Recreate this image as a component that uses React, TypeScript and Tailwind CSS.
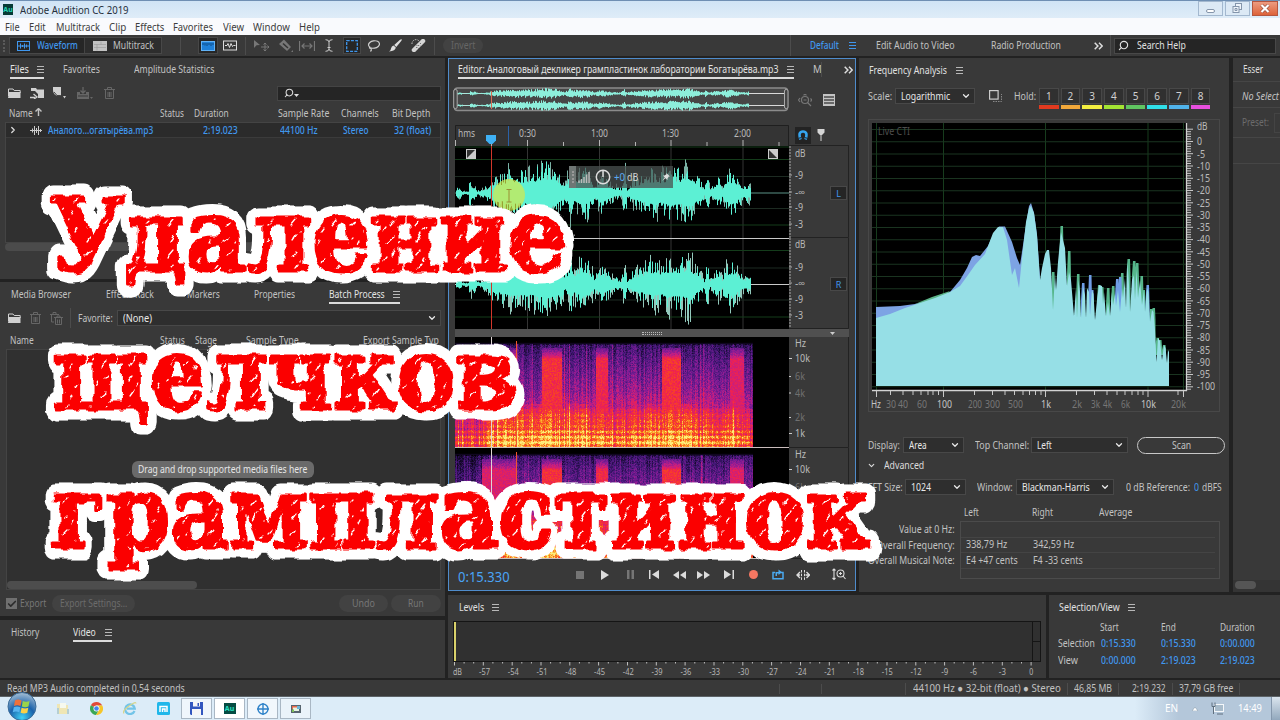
import React, { useEffect, useLayoutEffect, useRef, useState } from 'react';
import { Check, ChevronDown, ChevronRight, Search } from 'lucide-react';

// Deterministic noise, so the drawings are stable between renders
const rng = (seed: number) => () => {
  seed = (seed * 1664525 + 1013904223) % 4294967296;
  return seed / 4294967296;
};

const lerp = (pts: number[][], x: number) => {
  if (x <= pts[0][0]) return pts[0][1];
  for (let i = 1; i < pts.length; i++) {
    if (x <= pts[i][0]) {
      const [x0, y0] = pts[i - 1];
      const [x1, y1] = pts[i];
      return y0 + ((y1 - y0) * (x - x0)) / (x1 - x0);
    }
  }
  return pts[pts.length - 1][1];
};

const T: React.FC<{ w: number; className?: string; children: React.ReactNode }> = ({ w, className = '', children }) => {
  const ref = useRef<HTMLSpanElement>(null);
  const [k, setK] = useState(1);
  useLayoutEffect(() => {
    if (ref.current) setK(w / ref.current.offsetWidth);
  }, [w]);
  return (
    <span className={`inline-block shrink-0 ${className}`} style={{ width: w }}>
      <span ref={ref} className="inline-block origin-left whitespace-nowrap" style={{ transform: `scaleX(${k})` }}>{children}</span>
    </span>
  );
};

const Burger: React.FC<{ className?: string }> = ({ className = '' }) => (
  <span className={`flex w-[7px] shrink-0 flex-col gap-[2px] ${className}`}>
    <span className="h-px bg-current" />
    <span className="h-px bg-current" />
    <span className="h-px bg-current" />
  </span>
);

const ActiveTab: React.FC<{ w: number; label: string; gap?: string; className?: string }> = ({ w, label, gap = 'gap-2', className = '' }) => (
  <div className={`flex h-[18px] shrink-0 items-center border-b-2 border-[#dcdcdc] text-[#e4e4e4] ${gap} ${className}`}>
    <T w={w}>{label}</T>
    <Burger className="text-[#b8b8b8]" />
  </div>
);

const Dropdown: React.FC<{ w: number; label: string; className?: string }> = ({ w, label, className = '' }) => (
  <div className={`flex h-4 shrink-0 items-center justify-between border border-[#484848] bg-[#2e2e2e] pr-[3px] pl-[5px] text-[#e8e8e8] ${className}`}>
    <T w={w}>{label}</T>
    <ChevronDown size={10} strokeWidth={3} />
  </div>
);

const Folder = () => (
  <svg width="13" height="10" viewBox="0 0 13 10" className="shrink-0 text-[#d0d0d0]">
    <path d="M.5 8V1h4.5l1.2 1.5h6V5" fill="none" stroke="currentColor" />
    <path d="M1 4h11.5v6H0z" fill="currentColor" />
  </svg>
);

const Trash: React.FC<{ className?: string }> = ({ className = '' }) => (
  <svg width="11" height="12" viewBox="0 0 11 12" className={`shrink-0 text-[#666] ${className}`}>
    <path d="M0 2.5h11M3.5 2V.5h4V2M1.5 3v8.500h8V3M4 5v5M5.500 5v5M7 5v5" fill="none" stroke="currentColor" />
  </svg>
);

const Guillemet: React.FC<{ className?: string }> = ({ className = '' }) => (
  <svg width="9" height="8" viewBox="0 0 9 8" className={`shrink-0 text-[#ddd] ${className}`}>
    <path d="M.7 .7l3.2 3.3L.7 7.3M5 .7l3.2 3.3L5 7.3" fill="none" stroke="currentColor" strokeWidth="1.500" />
  </svg>
);

const Sep: React.FC<{ className?: string }> = ({ className = '' }) => <span className={`w-px shrink-0 bg-[#4c4c4c] ${className}`} />;

/* ---------- window chrome ---------- */

const TitleBar = () => (
  <div className="flex h-[18px] shrink-0 items-center border-t border-[#6f8fb3] bg-linear-to-b from-[#d0e4f5] to-[#dfecf8] pl-[3px] text-[#26303c]">
    <span className="flex h-[11px] w-[10px] items-center justify-center bg-[#063b36] text-[7px] font-bold text-[#25d3b5]">Au</span>
    <T w={109} className="ml-[7px] text-[11px]">Adobe Audition CC 2019</T>
    <div className="ml-auto flex h-full gap-[2px] pr-[2px] pb-[2px]">
      <span className="flex w-[25px] items-end justify-center border border-[#a3b8cf] bg-[#dce9f5] pb-[2px]"><i className="h-1 w-[9px] rounded-xs border border-[#8495ab] bg-white" /></span>
      <span className="flex w-[25px] items-center justify-center border border-[#a3b8cf] bg-[#dce9f5]">
        <svg width="11" height="11" viewBox="0 0 11 11" fill="#eef4fa" stroke="#8495ab"><rect x="3.500" y=".5" width="6" height="6" /><rect x="1" y="3.500" width="6" height="6" /><path d="M3 5.500h2v2H3z" /></svg>
      </span>
      <span className="flex w-[26px] items-center justify-center border border-[#b5563f] bg-linear-to-b from-[#ec9b80] to-[#dd6238]">
        <svg width="10" height="9" viewBox="0 0 10 9"><path d="M1.500 1l7 7m0-7l-7 7" stroke="#8d4534" strokeWidth="3.400" /><path d="M1.500 1l7 7m0-7l-7 7" stroke="#fff" strokeWidth="2.200" /></svg>
      </span>
    </div>
  </div>
);

const MENU: [string, number][] = [['File', 15], ['Edit', 17], ['Multitrack', 44], ['Clip', 17], ['Effects', 29], ['Favorites', 40], ['View', 21], ['Window', 37], ['Help', 21]];

const MenuBar = () => (
  <div className="flex h-[17px] shrink-0 items-center gap-[9.300px] bg-[#f9fafd] pl-[5px] text-[11px] text-[#3c3c3c]">
    {MENU.map(([label, w]) => <T key={label} w={w}>{label}</T>)}
  </div>
);

const Toolbar = () => (
  <div className="flex h-[21px] shrink-0 items-center bg-[#393939] text-[#c2c2c2]">
    <div className="flex w-[790px] items-center">
      <span className="ml-[3px] h-3 w-[2px] border-l-2 border-dotted border-[#5a5a5a]" />
      <div className="ml-1 flex h-[17px] w-[153px] items-center border border-[#484848] bg-[#2d2d2d]">
        <div className="flex h-full w-[75px] items-center gap-[7px] border-r border-[#444] bg-[#262626] pl-[7px] font-medium text-[#4097ee]">
          <svg width="13" height="10" viewBox="0 0 13 10" fill="none" stroke="currentColor"><rect x=".5" y=".5" width="12" height="9" /><path d="M1 5h11M3.500 2.500v5M5.500 4v2M7.500 2.500v5M9.500 3.500v3" /></svg>
          <T w={41}>Waveform</T>
        </div>
        <svg width="14" height="10" viewBox="0 0 14 10" className="ml-2"><path fill="currentColor" d="M0 0h14v10H0z" /><path d="M1 3.500h12M1 6.500h12M4 3.500v6M8 .5v3" stroke="#999" strokeWidth=".6" /></svg>
        <T w={41} className="ml-[6px]">Multitrack</T>
      </div>
      <Sep className="ml-[18px] h-[18px]" />
      <span className="ml-[17px] flex h-[17px] w-[20px] items-center justify-center border border-[#474747] bg-[#262626]">
        <svg width="14" height="10" viewBox="0 0 14 10"><rect x=".5" y=".5" width="13" height="9" fill="#1f80d8" stroke="#62b2f5" /><path d="M2 4V2m2 2.500V2m2 3V2m2 2V2m2 3V2m2 2V2" stroke="#0d4a86" /></svg>
      </span>
      <svg width="14" height="11" viewBox="0 0 14 11" fill="none" stroke="#ddd" className="ml-[5px]"><rect x=".5" y="1" width="13" height="9" /><path d="M2 5.500h2l1-2 1.500 4 1.500-4 1.500 3 1-1h2" /></svg>
      <Sep className="ml-[8px] h-[18px]" />
      <svg width="15" height="13" viewBox="0 0 15 13" className="ml-[8px] text-[#777]"><path d="M0 1l6 5-3.500.3L0 9z" fill="currentColor" /><path d="M7 8h8M11 4v8M9.500 5.500L11 4l1.500 1.500M9.500 10.500L11 12l1.500-1.500M13.500 6.500L15 8l-1.500 1.500" fill="none" stroke="currentColor" /></svg>
      <svg width="14" height="13" viewBox="0 0 14 13" className="ml-[10px] text-[#777]"><path d="M0 5l5-4.500L12 8l-4 4z" fill="currentColor" /><path d="M4 4.500l5 4.500" stroke="#333" strokeWidth="1.500" /><path d="M14 11v2h-2z" fill="currentColor" /></svg>
      <svg width="16" height="12" viewBox="0 0 16 12" fill="none" stroke="#777" className="ml-[6px]"><path d="M.5 1v10M15.500 1v10M3 6h10M5.500 3.500L3 6l2.500 2.500M10.500 3.500L13 6l-2.500 2.500" strokeWidth="1.200" /></svg>
      <svg width="8" height="13" viewBox="0 0 8 13" fill="none" stroke="#ccc" className="ml-[10px]"><path d="M.5.7Q4 .7 4 3v7q0 2.300-3.500 2.300M7.500.7Q4 .7 4 3M4 10q0 2.300 3.500 2.300M2.500 8.500h3" /></svg>
      <span className="ml-[10px] flex h-[17px] w-[18px] items-center justify-center border border-[#474747] bg-[#262626]">
        <svg width="12" height="12" viewBox="0 0 12 12"><rect x=".7" y=".7" width="10.600" height="10.600" fill="none" stroke="#3f97ee" strokeWidth="1.300" strokeDasharray="3 1.240" /></svg>
      </span>
      <svg width="13" height="12" viewBox="0 0 13 12" fill="none" stroke="#d0d0d0" strokeWidth="1.200" className="ml-[6px]"><ellipse cx="7" cy="4.500" rx="5.500" ry="3.700" transform="rotate(-8 7 4.500)" /><path d="M3 6.500Q1.500 8.500 4 8.500Q5 10 3.500 11.500" /></svg>
      <svg width="13" height="13" viewBox="0 0 13 13" className="ml-[9px]" fill="#ddd"><path d="M12.700.3Q13 1 12 2.300L7.300 8 5.200 6 11 .8Q12.200-.1 12.700.3zM4.600 6.600l2.200 2Q6.500 12 0 12.500 2 11.500 2 9.500 2.500 7 4.600 6.600z" /></svg>
      <svg width="15" height="13" viewBox="0 0 15 13" className="ml-[9px]"><path d="M3 11L12 2" stroke="#d5d5d5" strokeWidth="4.500" strokeLinecap="round" /><path d="M5.500 8.500l.1.100M7.500 6.500l.1.100M9.500 4.500l.1.100M7 9l.1.100M6 6.500l.1.100M9.500 7l.1.100" stroke="#444" strokeLinecap="round" /><path d="M1 5a4 4 0 0 1 7-3" fill="none" stroke="#ccc" strokeDasharray="1.500 1.200" /></svg>
      <Sep className="ml-[8px] h-[18px]" />
      <span className="ml-2 flex h-[15px] w-[40px] items-center justify-center rounded-full bg-[#424242] text-[#666]"><T w={24}>Invert</T></span>
    </div>
    <Sep className="h-full" />
    <T w={29} className="ml-[19px] font-medium text-[#4097ee]">Default</T>
    <Burger className="ml-[10px] text-[#4097ee]" />
    <T w={79} className="ml-[20px]">Edit Audio to Video</T>
    <T w={70} className="ml-[36px]">Radio Production</T>
    <Guillemet className="ml-[33px]" />
    <Sep className="ml-[7px] h-full" />
    <div className="ml-[3px] flex h-4 w-[162px] items-center border border-[#484848] bg-[#252525] pl-[3px] text-[#e0e0e0]">
      <Search size={11} strokeWidth={2.500} className="-scale-x-100" />
      <T w={49} className="ml-[8px]">Search Help</T>
    </div>
  </div>
);

/* ---------- left column ---------- */

const FilesPanel = () => (
  <section className="flex h-[221px] flex-col bg-[#393939] pt-[3px]">
    <div className="flex pl-[10px]">
      <ActiveTab w={19} label="Files" />
      <T w={37} className="mt-px ml-[19px]">Favorites</T>
      <T w={80} className="mt-px ml-[34px]">Amplitude Statistics</T>
    </div>
    <div className="mt-[6px] flex h-4 items-center pl-2">
      <Folder />
      <svg width="14" height="12" viewBox="0 0 14 12" className="ml-[9px] text-[#d0d0d0]"><path d="M1 4V1h5l1 1.500h7V11H8V7L5 4z" fill="currentColor" /><path d="M0 10.500h5M3.500 7L7 10l-3 2" fill="none" stroke="currentColor" strokeWidth="1.300" /></svg>
      <svg width="14" height="12" viewBox="0 0 14 12" className="ml-[8px] text-[#d0d0d0]"><path d="M1 0h8v8L6 9Q1 8 1 3z" fill="currentColor" /><path d="M2 5l3 3.500h3" fill="none" stroke="#444" /><path d="M11 9h3l-1.500 2.500z" fill="currentColor" /></svg>
      <svg width="16" height="13" viewBox="0 0 16 13" className="ml-[11px] text-[#666]"><path d="M0 5h3v2h6V5h3v7H0z" fill="currentColor" /><path d="M6 0v6M3.500 3.500L6 6l2.500-2.500" fill="none" stroke="currentColor" strokeWidth="1.300" /><path d="M1 9h10" stroke="#393939" /><path d="M13 10h3l-1.500 2z" fill="currentColor" /></svg>
      <Trash className="ml-[11px]" />
      <div className="mr-[4px] ml-auto flex h-[15px] w-[164px] items-center border border-[#444] bg-[#252525] pl-[6px] text-[#ddd]">
        <Search size={10} strokeWidth={2.500} className="-scale-x-100" />
        <svg width="5" height="3" viewBox="0 0 5 3" className="mt-1"><path d="M0 0h5L2.500 3z" fill="currentColor" /></svg>
      </div>
    </div>
    <div className="mt-[3px] flex h-[18px] items-center pl-[9px]">
      <T w={24}>Name</T>
      <svg width="7" height="8" viewBox="0 0 7 8" className="mb-[2px] ml-[2px]"><path d="M3.500 8V1M.5 3.500l3-3 3 3" fill="none" stroke="currentColor" strokeWidth="1.400" /></svg>
      <T w={24} className="ml-[118px]">Status</T>
      <T w={35} className="ml-[10px]">Duration</T>
      <T w={51} className="ml-[49px]">Sample Rate</T>
      <T w={38} className="ml-[12px]">Channels</T>
      <T w={38} className="ml-[13px]">Bit Depth</T>
    </div>
    <div className="mr-[4px] ml-[5px] h-[121px] border border-[#444] bg-[#303030]">
      <div className="flex h-[15px] items-center border-b border-[#3b3b3b] bg-[#2b2b2b] pl-[2px] font-medium text-[#4097ee]">
        <ChevronRight size={10} strokeWidth={3} className="text-[#ddd]" />
        <svg width="12" height="9" viewBox="0 0 12 9" className="ml-[12px]" stroke="#ccc"><path d="M0 4.500h12M2.500 2.500v4M4.500 0v9M6.500 2v5M8.500 0v9M10.500 3v3" /></svg>
        <T w={105} className="ml-[6px]">Аналого...огатырёва.mp3</T>
        <T w={35} className="ml-[50px]">2:19.023</T>
        <T w={38} className="ml-[42px]">44100 Hz</T>
        <T w={26} className="ml-[25px]">Stereo</T>
        <T w={37} className="ml-[25px]">32 (float)</T>
      </div>
    </div>
    <div className="ml-[5px] h-2 w-[290px] rounded-full bg-[#4b4b4b]" />
  </section>
);

const BatchPanel = () => (
  <section className="flex h-[334px] flex-col bg-[#393939] pt-1">
    <div className="flex pl-[11px]">
      <T w={60} className="mt-px">Media Browser</T>
      <T w={48} className="mt-px ml-[35px]">Effects Rack</T>
      <T w={33} className="mt-px ml-[33px]">Markers</T>
      <T w={41} className="mt-px ml-[34px]">Properties</T>
      <ActiveTab w={56} label="Batch Process" className="ml-[34px]" />
    </div>
    <div className="mt-[6px] flex h-4 items-center pl-2">
      <Folder />
      <Trash className="ml-[9px]" />
      <svg width="13" height="13" viewBox="0 0 13 13" fill="none" stroke="#666" className="ml-[9px]"><path d="M0 2.500h9M3 2V.5h3V2M1.500 3v7H4M4 5.500h9M7 5V4h3v1M5.500 6v6.500h6V6M7.500 7.500v4M9.500 7.500v4" /></svg>
      <Sep className="ml-[7px] h-5" />
      <T w={35} className="ml-[7px]">Favorite:</T>
      <Dropdown w={29} label="(None)" className="ml-[4px] w-[324px]" />
    </div>
    <div className="mt-[5px] flex h-[18px] items-center pl-[10px]">
      <T w={24}>Name</T>
      <T w={25} className="ml-[126px]">Status</T>
      <T w={22} className="ml-[10px]">Stage</T>
      <T w={53} className="ml-[29px]">Sample Type</T>
      <T w={76} className="ml-[64px]">Export Sample Typ</T>
    </div>
    <div className="mr-[4px] ml-[6px] flex h-[241px] flex-col items-center border border-[#444] bg-[#303030]">
      <div className="mt-[111px] mr-[2px] flex h-[17px] w-[182px] items-center rounded-md bg-[#6a6a6a] pl-[6px] text-[#e6e6e6]">
        <T w={169}>Drag and drop supported media files here</T>
      </div>
      <span className="mt-auto h-2 w-[190px] self-start rounded-full bg-[#4d4d4d]" />
    </div>
    <div className="mt-[5px] flex h-[17px] items-center pl-[6px] text-[#777]">
      <span className="flex h-[11px] w-[11px] items-center justify-center bg-[#707070] text-[#2c2c2c]"><Check size={10} strokeWidth={4} /></span>
      <T w={26} className="ml-[3px]">Export</T>
      <span className="ml-[6px] flex h-full w-[83px] items-center rounded-full bg-[#424242] pl-[8px] text-[#6c6c6c]"><T w={67}>Export Settings...</T></span>
      <span className="ml-auto flex h-full w-[49px] items-center justify-center rounded-full bg-[#424242]"><T w={23}>Undo</T></span>
      <span className="mr-[4px] ml-[3px] flex h-full w-[50px] items-center justify-center rounded-full bg-[#424242]"><T w={16}>Run</T></span>
    </div>
  </section>
);

const VideoPanel = () => (
  <section className="flex h-[58px] items-start bg-[#393939] pt-1 pl-[11px]">
    <T w={28} className="mt-px">History</T>
    <ActiveTab w={23} label="Video" gap="gap-[9px]" className="ml-[34px]" />
  </section>
);

/* ---------- editor ---------- */

const ENVELOPE = [[0, 6], [4, 8], [6, 2], [12, 3], [13, 14], [18, 11], [21, 3], [26, 5], [32, 10], [36, 18], [45, 20], [54, 28], [62, 26], [75, 26], [86, 32], [92, 34], [100, 28], [109, 12], [114, 32], [118, 20], [126, 30], [132, 26], [138, 11], [145, 22], [152, 15], [158, 9], [165, 6], [169, 28], [171, 6], [177, 16], [186, 20], [195, 27], [205, 24], [213, 30], [225, 28], [232, 35], [242, 18], [248, 6], [251, 26], [254, 6], [258, 13], [262, 19], [266, 9], [269, 22], [278, 26], [283, 14], [288, 9], [294, 12], [295, 0]];

const wavePath = (seed: number, mid: number, gain: number, body: number, power: number, width: number) => {
  const r = rng(seed);
  let d = '';
  for (let x = 0; x < width; x++) {
    const e = lerp(ENVELOPE, (x / width) * 295) * gain;
    const up = e * (body + (1 - body) * Math.pow(r(), power));
    const down = e * (body + (1 - body) * Math.pow(r(), power));
    d += `M${x + 0.5} ${(mid - up).toFixed(1)}V${(mid + down).toFixed(1)}`;
  }
  return d;
};

const Overview = () => (
  <svg width="336" height="25" viewBox="0 0 336 25" className="shrink-0">
    <rect x="1.500" y="1" width="333" height="22.500" rx="3" fill="#474747" stroke="#8c8c8c" strokeWidth="1.500" />
    <path d="M4 6.500h327M4 18.500h327" stroke="#d9d9d9" />
    <path d={wavePath(5, 6.5, 0.17, 0.4, 1, 292)} stroke="#8deedb" transform="translate(4 0)" />
    <path d={wavePath(9, 18.5, 0.17, 0.4, 1, 292)} stroke="#8deedb" transform="translate(4 0)" />
    <path d="M38.500 4v18" stroke="#d86a52" />
    <rect x=".7" y="2.500" width="3.500" height="19" rx="1.500" fill="#444" stroke="#aaa" />
    <rect x="331.500" y="2.500" width="3.500" height="19" rx="1.500" fill="#444" stroke="#aaa" />
  </svg>
);

const Ruler = () => (
  <svg width="334" height="21" viewBox="0 0 334 21" className="block shrink-0" fontSize="10.500" fill="#b9b9b9">
    <path d="M0 0h334v21H0z" fill="#343434" />
    <path d="M.5 21V.5H333.500V21" fill="none" stroke="#1f1f1f" />
    {[72, 144, 215.5, 287.5].map((x) => <path key={x} d={`M${x + 0.5} 15v6M${x + 36.5} 17v4`} stroke="#b5b5b5" />)}
    <path d="M.5 15v6M36.500 17v4" stroke="#b5b5b5" />
    <path d="M53.500 1v20" stroke="#2b62a8" />
    <text x="3" y="12" textLength="17" lengthAdjust="spacingAndGlyphs">hms</text>
    <text x="64" y="12" textLength="17" lengthAdjust="spacingAndGlyphs">0:30</text>
    <text x="136" y="12" textLength="17" lengthAdjust="spacingAndGlyphs">1:00</text>
    <text x="207" y="12" textLength="17" lengthAdjust="spacingAndGlyphs">1:30</text>
    <text x="279" y="12" textLength="17" lengthAdjust="spacingAndGlyphs">2:00</text>
    <path d="M31 10h10v5.500L37.500 19h-3L31 15.500z" fill="#3fb1f5" />
  </svg>
);

const Waveforms = () => (
  <svg width="334" height="183" viewBox="0 0 334 183" className="block shrink-0 bg-black">
    <path d="M72.500 0v183M144.500 0v183M216 0v183M288 0v183" stroke="#343434" />
    <path d="M0 1h334M0 13.500h334M0 79h334M0 104.500h334M0 171h334" stroke="#143c1b" />
    <path d="M0 30.500h334M0 62.500h334M0 122h334M0 154h334" stroke="#1d2b22" />
    <path d="M0 47h334" stroke="#5a9286" />
    <path d="M0 138.500h334M0 92.500h334" stroke="#c9c9c9" />
    <path d={wavePath(21, 47, 1.15, 0.15, 2.6, 295)} stroke="#7ab3a6" transform="translate(1 0)" />
    <path d={wavePath(3, 47, 0.95, 0.42, 2.4, 295)} stroke="#5cf0d4" transform="translate(1 0)" />
    <path d={wavePath(77, 138.5, 1.2, 0.15, 2.6, 295)} stroke="#92c8bb" transform="translate(1 0)" />
    <path d={wavePath(13, 138.5, 0.95, 0.42, 2.4, 295)} stroke="#5cf0d4" transform="translate(1 0)" />
    <path d="M36.500 0v183" stroke="#d2362a" />
    <circle cx="54" cy="49" r="16" fill="#d6e84a" opacity=".7" />
    <path d="M51.500 43.500h5M54 44v12M51.500 56h5" stroke="#9a8f35" />
    <path d="M11 3h10v10H11z" fill="#ccc" /><path d="M12 4h8L12 12z" fill="#333" />
    <path d="M313 3h10v10h-10z" fill="#ccc" /><path d="M314 12V4l8 8z" fill="#333" />
  </svg>
);

const HEAT = [[0, 0, 0, 0], [0.15, 24, 9, 48], [0.3, 68, 24, 120], [0.45, 128, 28, 150], [0.58, 196, 30, 130], [0.7, 240, 34, 78], [0.8, 248, 72, 30], [0.9, 251, 160, 36], [1, 253, 238, 125]];
const BURSTS = [[27, 61, 0.24], [87, 107, 0.34], [141, 153, 0.31], [207, 226, 0.34], [275, 289, 0.25]];
const FLOOR = [[0, 0], [5, 0.02], [8, 0.26], [20, 0.33], [35, 0.4], [55, 0.48], [68, 0.56], [76, 0.7], [90, 0.77], [103, 0.88], [110, 0.88]];

const Spectrogram: React.FC<{ seed: number }> = ({ seed }) => {
  const ref = useRef<HTMLCanvasElement>(null);
  useEffect(() => {
    const ctx = ref.current?.getContext('2d');
    if (!ctx) return;
    const r = rng(seed);
    const img = ctx.createImageData(334, 111);
    for (let x = 0; x < 298; x++) {
      const streak = (r() - 0.5) * 0.15;
      const click = r() > 0.95 ? 0.13 : 0;
      const loud = lerp(ENVELOPE, x) / 30 - 0.6;
      const burst = BURSTS.find((b) => x >= b[0] && x < b[1]);
      for (let y = 0; y < 111; y++) {
        let v = lerp(FLOOR, y);
        if (y > 6) v += streak + (r() - 0.5) * 0.17 + click + (x < 27 ? -0.07 : 0);
        if (y > 66) v += loud * 0.16 + Math.sin(y * 1.15) * 0.05 * (y > 90 ? 1.5 : 0.5);
        if (burst && y > 10 && y < 76) v = Math.max(v, lerp([[10, 0.38], [18, 0.42 + burst[2] * 0.5], [22, 0.4 + burst[2]], [76, 0.38 + burst[2]]], y) + (r() - 0.5) * 0.12);
        if (y < 5) v = 0;
        v = Math.min(1, Math.max(0, v));
        const i = (y * 334 + x) * 4;
        for (let c = 0; c < 3; c++) img.data[i + c] = lerp(HEAT.map((h) => [h[0], h[c + 1]]), v);
      }
    }
    for (let i = 3; i < img.data.length; i += 4) img.data[i] = 255;
    ctx.putImageData(img, 0, 0);
    ctx.fillStyle = '#e0d5d5';
    ctx.fillRect(36, 0, 1, 111);
    ctx.fillStyle = '#f0562c';
    ctx.fillRect(61, 4, 1, 107);
    ctx.fillStyle = '#c9bcbc';
    ctx.fillRect(0, 110, 334, 1);
  }, [seed]);
  return <canvas ref={ref} width={334} height={111} className="block shrink-0" />;
};

const scaleTicks = (from: number, to: number) => {
  let d = '';
  for (let y = from; y < to; y += 3) d += `M0 ${y}h2`;
  return d;
};

const DbScale: React.FC<{ label: string; ys: number[]; h: number; top: string }> = ({ label, ys, h, top }) => (
  <div className="relative">
    <svg width="60" height={h} viewBox={`0 0 60 ${h}`} className="block" fontSize="10" fill="#b9b9b9">
      <path d={`M59.500 0V${h - 0.5}H0`} fill="none" stroke="#222" />
      <path d={scaleTicks(1, h) + ys.slice(1).map((y) => `M0 ${y}h3`).join('')} stroke="#aaa" />
      {['dB', '-9', '-∞', '-9', '-3'].map((t, i) => <text key={i} x="6" y={ys[i] + 3.5} textLength={t === '-∞' || t === 'dB' ? 10.5 : 8} lengthAdjust="spacingAndGlyphs">{t}</text>)}
    </svg>
    <span className={`absolute left-[41px] flex h-[14px] w-[17px] items-center justify-center border border-[#484848] bg-[#252525] text-[9px] text-[#4097ee] ${top}`}>{label}</span>
  </div>
);

const HzScale = () => (
  <svg width="60" height="111" viewBox="0 0 60 111" className="block" fontSize="10" fill="#b9b9b9">
    <path d="M59.500 0V110.500H0" fill="none" stroke="#222" />
    <path d="M0 21.500h3M0 39.500h2M0 56h2M0 80.500h2M0 96.500h3" stroke="#ccc" />
    <text x="6" y="10" textLength="11" lengthAdjust="spacingAndGlyphs">Hz</text>
    <text x="6" y="25" textLength="15" lengthAdjust="spacingAndGlyphs">10k</text>
    <text x="6" y="43" textLength="10" lengthAdjust="spacingAndGlyphs" fill="#707070">6k</text>
    <text x="6" y="60" textLength="10" lengthAdjust="spacingAndGlyphs" fill="#707070">4k</text>
    <text x="6" y="84" textLength="10" lengthAdjust="spacingAndGlyphs" fill="#707070">2k</text>
    <text x="6" y="100" textLength="10" lengthAdjust="spacingAndGlyphs">1k</text>
  </svg>
);

const Hud = () => (
  <div className="absolute top-[20px] left-[114px] flex h-[22px] w-[104px] items-center bg-[#4a5250]/75 text-[#d5d5d5]">
    <span className="flex h-full w-[7px] items-center justify-center bg-[#6e7674]"><i className="h-3 border-l-2 border-dotted border-[#999]" /></span>
    <svg width="13" height="12" viewBox="0 0 13 12" className="ml-[2px]" stroke="#bbb" strokeWidth="1.500"><path d="M1 12V9.500M3.500 12V8M6 12V6M8.500 12V3.500M11 12V1" /></svg>
    <svg width="16" height="16" viewBox="0 0 16 16" className="ml-[4px]" fill="none" stroke="#ddd" strokeWidth="1.500"><circle cx="8" cy="8" r="6.700" /><path d="M8 8V2" /></svg>
    <T w={11} className="ml-[3px] text-[#5aa9f2]">+0</T>
    <T w={11} className="ml-[2px]">dB</T>
    <svg width="8" height="8" viewBox="0 0 8 8" className="ml-[24px]" fill="#ddd"><path d="M4.500 0L8 3.500 6.800 3.600 5.500 5.500 5.500 7 3.500 5.300 0 8 2.700 4.500 1 2.500 2.500 2.500 4.400 1.200z" /></svg>
  </div>
);

const Transport = () => (
  <div className="flex h-[31px] items-center pl-[9px] text-[#dcdcdc]">
    <T w={52} className="mt-[3px] text-[14px] text-[#4aa4f5]">0:15.330</T>
    <i className="ml-[66px] h-2 w-2 bg-[#757575]" />
    <svg width="8" height="10" viewBox="0 0 8 10" className="ml-[17px]"><path d="M0 0l8 5-8 5z" fill="currentColor" /></svg>
    <svg width="7" height="9" viewBox="0 0 7 9" className="ml-[18px] text-[#757575]"><path d="M0 0h2.500v9H0zM4.500 0H7v9H4.500z" fill="currentColor" /></svg>
    <svg width="10" height="9" viewBox="0 0 10 9" className="ml-[15px]"><path d="M0 0h1.500v9H0zM10 0v9L3 4.500z" fill="currentColor" /></svg>
    <svg width="13" height="8" viewBox="0 0 13 8" className="ml-[14px]"><path d="M6 0v8L0 4zM13 0v8L7 4z" fill="currentColor" /></svg>
    <svg width="13" height="8" viewBox="0 0 13 8" className="ml-[11px]"><path d="M0 0l6 4-6 4zM7 0l6 4-6 4z" fill="currentColor" /></svg>
    <svg width="10" height="9" viewBox="0 0 10 9" className="ml-[14px]"><path d="M0 0l7 4.500L0 9zM8.500 0H10v9H8.500z" fill="currentColor" /></svg>
    <i className="ml-[15px] h-[9px] w-[9px] rounded-full bg-[#f57762]" />
    <svg width="12" height="11" viewBox="0 0 12 11" className="ml-[14px] text-[#4aa9f0]"><path d="M3 3.500H1v6.200h10V3.500H9" fill="none" stroke="currentColor" strokeWidth="1.500" /><path d="M3.500 7V3h3V.5L10 3.200 6.500 6V4.500H5V7z" fill="currentColor" /></svg>
    <svg width="14" height="10" viewBox="0 0 14 10" className="ml-[12px]"><path d="M5.500 0v10M8.500 0v10" stroke="currentColor" strokeDasharray="2.500 1.200" /><path d="M4 2L1 5l3 3M10.500 2l3 3-3 3M1 5h3M9.500 5H14" fill="none" stroke="currentColor" strokeWidth="1.400" /></svg>
    <svg width="14" height="13" viewBox="0 0 14 13" className="ml-[22px]" fill="none" stroke="currentColor" strokeWidth="1.100"><path d="M2 1v10.500M.5 2.500L2 1l1.500 1.500M.5 10L2 11.500 3.500 10" /><circle cx="8.500" cy="5.500" r="3.500" /><path d="M11 8l2.500 3M7 5.500h3M8.500 4v3" /></svg>
  </div>
);

const Editor = () => (
  <section className="flex h-[533px] w-[408px] shrink-0 flex-col border border-[#4f8ccc] bg-[#393939]">
    <div className="flex h-[28px] pt-[2px] pl-[9px]">
      <ActiveTab w={320} label="Editor: Аналоговый декликер грампластинок лаборатории Богатырёва.mp3" gap="gap-[9px]" className="w-[336px]" />
      <span className="mt-px ml-[19px] h-[15px] w-[9px] overflow-hidden border-r border-[#4c4c4c]"><T w={11}>Mi</T></span>
      <Guillemet className="mt-[5px] ml-[22px]" />
    </div>
    <div className="flex h-[39px] pl-[4px]">
      <Overview />
      <svg width="14" height="13" viewBox="0 0 14 13" fill="none" stroke="#777" strokeWidth="1.200" className="mt-[7px] ml-[9px]"><circle cx="7" cy="6" r="3.500" /><path d="M9.500 8.500L13 12M5.500 6h3M2 4L.5 6 2 8M12.500 4.500L14 6l-1.500 1.500M5.500 1.300L7 .3l1.500 1" /></svg>
      <svg width="12" height="12" viewBox="0 0 12 12" className="mt-[7px] ml-[11px]"><path d="M0 0h12v12H0z" fill="#c4c4c4" /><path d="M1 3h10M1 6h10M1 9h10" stroke="#4a4a4a" strokeWidth="1.300" /></svg>
    </div>
    <div className="flex">
      <div className="ml-[6px] w-[334px]">
        <Ruler />
        <div className="relative">
          <Waveforms />
          <Hud />
        </div>
      </div>
      <div className="w-[60px]">
        <div className="flex h-[21px] items-center border-b border-[#222] pl-[6px]">
          <span className="flex h-[17px] w-[16px] items-center justify-center bg-[#232323]">
            <svg width="10" height="11" viewBox="0 0 10 11"><path d="M2.500 9.500Q-.3 1.500 5 1.500T7.500 9.500" fill="none" stroke="#35a5f0" strokeWidth="2.600" /><path d="M.8 8.200l2.600-.6M9.200 8.200l-2.600-.6" stroke="#232323" /></svg>
          </span>
          <svg width="8" height="12" viewBox="0 0 8 12" className="ml-[6px]"><path d="M.5 0h7v3.500L5 6H3L.5 3.500zM3.500 6h1v6h-1z" fill="#d5d5d5" /></svg>
        </div>
        <DbScale label="L" ys={[7, 29, 46, 61, 78]} h={92} top="top-[40px]" />
        <DbScale label="R" ys={[6, 29, 45, 61, 77]} h={91} top="top-[39px]" />
      </div>
    </div>
    <div className="ml-[6px] flex h-[8px] w-[394px] items-center bg-[#505050]">
      <i className="ml-[187px] h-[3px] w-5 border-y border-dotted border-[#bbb]" />
      <svg width="5" height="3" viewBox="0 0 5 3" className="ml-[168px]"><path d="M0 0h5L2.500 3z" fill="#ccc" /></svg>
    </div>
    <div className="ml-[6px] flex h-[222px] shrink-0">
      <div className="w-[334px]">
        <Spectrogram seed={42} />
        <Spectrogram seed={99} />
      </div>
      <div className="w-[60px]">
        <HzScale />
        <HzScale />
      </div>
    </div>
    <Transport />
  </section>
);

/* ---------- frequency analysis ---------- */

const HOLDS = ['bg-[#e23a1f]', 'bg-[#f2a83a]', 'bg-[#f3ee40]', 'bg-[#a3e433]', 'bg-[#60c561]', 'bg-[#30dfe8]', 'bg-[#50b3ea]', 'bg-[#e850df]'];

const LEFT_CH = [[4, 307], [28, 306], [43, 304], [58, 300], [78, 292], [88, 280], [95, 268], [100, 257], [104, 255], [108, 256], [116, 246], [122, 233], [127, 226.5], [133, 226.5], [140, 242], [145, 258], [148, 265], [150, 252], [154, 225], [157, 206], [159, 203], [162, 213], [165, 235], [168, 278]];
const COMMON = [[4, 318], [18, 314], [33, 308], [48, 303], [63, 298], [78, 292], [88, 286], [96, 275], [103, 265], [113, 254], [121, 233], [126, 227], [131, 227], [135, 240], [140, 275], [143, 268], [147, 288], [150, 258], [154, 222], [157, 208], [159, 206], [162, 213], [165, 235], [168, 280], [170, 268], [173, 254], [175, 250], [177, 250], [179, 268], [181, 310], [183, 274], [184, 290], [186, 262], [189, 232], [191, 240], [193, 248], [195, 286], [197, 272], [199, 280], [202, 316], [204, 288], [205, 318], [206.5, 280], [208, 292], [209, 318], [211, 287], [213, 295], [214, 318], [215, 288], [217, 292], [218, 315], [220, 290], [221.5, 294], [223, 320], [225, 300], [227, 285], [230, 286], [231, 304], [232, 292], [234, 316], [236, 302], [238, 316], [240, 292], [241, 305], [243, 294], [244, 306], [246, 290], [248, 312], [250, 288], [251, 298], [253, 278], [254, 308], [255.5, 262], [257, 285], [258, 312], [260, 280], [262, 275], [263, 300], [264.5, 270], [266, 298], [268, 280], [270, 305], [272, 290], [273, 312], [275, 288], [276.5, 292], [278, 322], [280, 310], [281.5, 312], [283, 330], [284.5, 362], [286, 338], [288, 341], [290, 360], [292, 345], [293.5, 348], [295, 363], [296, 350], [297, 352]];
const SPIKES = [[181, 272, 300], [189.5, 226, 250], [197, 251, 276], [206, 274, 300], [227, 285, 300], [230, 287, 304], [236, 288, 305], [241, 286, 300], [250, 273, 290], [256.5, 259, 275], [262, 261, 275], [265, 263, 280], [269.5, 276, 296], [271.5, 290, 305], [279, 309, 320], [281.5, 308, 320], [285.5, 338, 345], [288, 340, 347], [292, 345, 350]];
const BLUE_SPIKES = [[211, 283, 300], [218, 275, 300], [220, 290, 304], [245, 279, 296], [248, 277, 296], [275.5, 285, 303]];

const area = (pts: number[][]) => `M${pts[0][0]} 386${pts.map(([x, y]) => `L${x} ${y}`).join('')}V386z`;

const spikes = (list: number[][]) => list.map(([x, top, base]) => `M${x - 1} ${top}h2.500L${x + 2} ${base}V355H${x - 2}V${base}z`).join('');

const DB = ['dB', '0', '-5', '-10', '-15', '-20', '-25', '-30', '-35', '-40', '-45', '-50', '-55', '-60', '-65', '-70', '-75', '-80', '-85', '-90', '-95', '-100'];
const HZ: [string, number, number, boolean][] = [['Hz', 871, 10, true], ['30', 886, 10, false], ['40', 898, 10, false], ['60', 917, 10, false], ['100', 937, 15, true], ['200', 968, 14, false], ['300', 985, 15, false], ['500', 1008, 15, false], ['1k', 1041, 10, true], ['2k', 1072, 10, false], ['3k', 1091, 9, false], ['4k', 1103, 9, false], ['6k', 1121, 9, false], ['10k', 1141, 15, true], ['20k', 1171, 15, false]];

const rightTicks = () => {
  let d = '';
  for (let i = 0; i <= 106; i++) d += `M1187 ${(129.2 + i * 2.453).toFixed(1)}h${i % 5 === 0 ? 6 : 4}`;
  return d;
};

const FrequencyChart = () => (
  <svg width="352" height="293" viewBox="868 119 352 293" className="ml-[9px] block" fontSize="10">
    <rect x="868.500" y="119.500" width="351" height="292" fill="none" stroke="#484848" />
    <rect x="872" y="123" width="314" height="267" fill="#000" />
    <path d="M876.500 123v267M943.500 123v267M1045.500 123v267M1148 123v267M1183.500 123v267" stroke="#173c1d" />
    <path d={DB.map((_, i) => `M872 ${129.5 + i * 12.25}h314`).join('')} stroke="#1a3420" />
    <text x="878" y="135" fill="#4e4e4e" textLength="32" lengthAdjust="spacingAndGlyphs">Live CTI</text>
    <g transform="translate(872 0)">
      <path d={area(LEFT_CH)} fill="#7da3e4" />
      <path d="M43 304L60 297 78 291 70 300z" fill="#5db489" />
      <path d={spikes(SPIKES)} fill="#56b68b" />
      <path d={spikes(BLUE_SPIKES)} fill="#6f9de6" />
      <path d={area(COMMON)} fill="#96dfe6" />
    </g>
    <path d="M1186.500 123v268M872 390.500h315" stroke="#d2d2d2" strokeWidth="1.300" />
    <path d={rightTicks()} stroke="#c8c8c8" />
    <path d="M876.500 391v6M890.500 391v4M903 391v4M913 391v4M921 391v4M928 391v4M933 391v4M938.500 391v4M943.500 391v6M974.500 391v4M992.500 391v4M1005 391v4M1014.500 391v4M1023 391v4M1029.500 391v4M1035.500 391v4M1041 391v4M1045.500 391v6M1076.500 391v4M1094.500 391v4M1107 391v4M1117 391v4M1125 391v4M1132 391v4M1138 391v4M1143 391v4M1148 391v6M1178 391v4M1183.500 391v6" stroke="#c8c8c8" />
    {DB.map((t, i) => <text key={t} x="1197" y={i === 0 ? 129.5 : 133 + i * 12.26} fill="#bbb" textLength={t === 'dB' ? 10.5 : t === '0' ? 5 : t.length === 2 ? 8 : t.length === 3 ? 13 : 18} lengthAdjust="spacingAndGlyphs">{t}</text>)}
    {HZ.map(([t, x, w, major]) => <text key={t} x={x} y="408" fill={major ? '#c4c4c4' : '#777'} textLength={w} lengthAdjust="spacingAndGlyphs">{t}</text>)}
  </svg>
);

const FrequencyPanel = () => (
  <section className="flex h-[534px] w-[370px] shrink-0 flex-col bg-[#393939]">
    <div className="flex h-[24px] items-center pl-[10px] text-[#e0e0e0]">
      <T w={78}>Frequency Analysis</T>
      <Burger className="ml-[9px] text-[#b8b8b8]" />
    </div>
    <div className="mt-[6px] flex h-[23px] items-start pl-[9px]">
      <T w={24} className="mt-px">Scale:</T>
      <Dropdown w={49} label="Logarithmic" className="ml-[3px] w-[80px]" />
      <svg width="13" height="13" viewBox="0 0 13 13" fill="none" className="mt-[2px] ml-[14px]"><path d="M4 11.500h8.500V4" stroke="#888" strokeDasharray="1.500 1" /><rect x=".6" y=".6" width="8.500" height="8.500" stroke="#ccc" strokeWidth="1.200" /></svg>
      <T w={22} className="mt-px ml-[12px]">Hold:</T>
      <div className="ml-[3px] flex gap-[2.200px]">
        {HOLDS.map((color, i) => (
          <div key={color} className="w-[19.500px]">
            <div className="flex h-4 items-center justify-center border border-[#484848] bg-[#303030] text-[10px] text-[#d0d0d0]">{i + 1}</div>
            <div className={`mt-px h-[4px] ${color}`} />
          </div>
        ))}
      </div>
    </div>
    <div className="mt-[8px]"><FrequencyChart /></div>
    <div className="mt-[25px] flex h-4 items-center pl-[9px]">
      <T w={32}>Display:</T>
      <Dropdown w={18} label="Area" className="ml-[3px] w-[61px]" />
      <T w={54} className="ml-[11px]">Top Channel:</T>
      <Dropdown w={15} label="Left" className="ml-[2px] w-[97px]" />
      <span className="ml-[9px] flex h-[17px] w-[88px] shrink-0 items-center justify-center rounded-full border-[1.500px] border-[#c8c8c8]"><T w={19}>Scan</T></span>
    </div>
    <div className="flex h-[26px] items-center pb-px pl-[8px] text-[#dcdcdc]">
      <ChevronDown size={9} strokeWidth={3} />
      <T w={40} className="ml-[8px]">Advanced</T>
    </div>
    <div className="flex h-4 items-center pl-[9px]">
      <T w={35}>FFT Size:</T>
      <Dropdown w={20} label="1024" className="ml-[2px] w-[61px]" />
      <T w={36} className="ml-[11px]">Window:</T>
      <Dropdown w={68} label="Blackman-Harris" className="ml-[3px] w-[98px]" />
      <T w={64} className="ml-[12px]">0 dB Reference:</T>
      <T w={5} className="ml-[4px] text-[#4097ee]">0</T>
      <T w={20} className="ml-[3px]">dBFS</T>
    </div>
    <div className="mt-[9px] flex h-[17px] items-center pl-[105px]">
      <T w={15}>Left</T>
      <T w={21} className="ml-[53px]">Right</T>
      <T w={33} className="ml-[46px]">Average</T>
    </div>
    <div className="flex">
      <div className="flex w-[96px] flex-col items-end pt-px">
        <T w={56} className="h-[15.500px]">Value at 0 Hz:</T>
        <T w={79} className="h-[15.500px]">Overall Frequency:</T>
        <T w={87} className="h-[15.500px]">Overall Musical Note:</T>
      </div>
      <div className="ml-[5px] h-[58px] w-[260px] border border-[#4b4b4b]">
        <div className="mr-1 h-[15.500px] border-b border-[#444]" />
        <div className="mr-1 flex h-[15.500px] items-center border-b border-[#444] pl-[5px]"><T w={41}>338,79 Hz</T><T w={41} className="ml-[26px]">342,59 Hz</T></div>
        <div className="mr-1 flex h-[15.500px] items-center border-b border-[#444] pl-[5px]"><T w={52}>E4 +47 cents</T><T w={50} className="ml-[15px]">F4 -33 cents</T></div>
      </div>
    </div>
  </section>
);

const EssentialPanel = () => (
  <section className="flex h-[534px] w-[47px] shrink-0 flex-col overflow-hidden bg-[#393939]">
    <div className="flex h-[24px] items-center border-b border-[#464646] pl-[10px] text-[#dcdcdc]"><T w={20}>Esser</T></div>
    <div className="flex h-[26px] items-center border-b border-[#464646] pt-1 pl-[9px] italic"><T w={37}>No Select</T></div>
    <div className="flex h-[30px] items-center justify-between border-b border-[#464646] pl-[9px] text-[#6c6c6c]"><T w={27}>Preset:</T><i className="h-5 w-[6px] border border-r-0 border-[#444]" /></div>
    <div className="h-[26px] border-b border-[#464646]" />
    <div className="mt-auto h-[12px] bg-[#343434] pt-px pl-[2px]"><div className="h-2 w-[21px] rounded-full bg-[#555]" /></div>
  </section>
);

/* ---------- bottom row ---------- */

const LevelsPanel = () => (
  <section className="h-[83px] w-[598px] shrink-0 bg-[#393939]">
    <div className="flex h-[25px] items-center pl-[11px] text-[#e0e0e0]">
      <T w={25}>Levels</T>
      <Burger className="ml-[8px] text-[#b8b8b8]" />
    </div>
    <svg width="598" height="58" viewBox="448 620 598 58" className="block" fontSize="8.500" fill="#b5b5b5">
      <rect x="453.500" y="621.500" width="587" height="40" fill="#303030" stroke="#151515" />
      <path d="M1032.500 621v40M1032 641.500h8" stroke="#151515" />
      <path d="M455 622v39" stroke="#d8d06a" strokeWidth="2" />
      <path d={Array.from({ length: 61 }, (_, i) => `M${(454.5 + i * 9.61).toFixed(1)} 662v${i % 3 ? 1.5 : 3.5}`).join('')} stroke="#bdbdbd" />
      <text x="453" y="675" textLength="9" lengthAdjust="spacingAndGlyphs">dB</text>
      {Array.from({ length: 20 }, (_, i) => -57 + i * 3).map((db, i) => (
        <text key={db} x={484.5 + i * 28.77} y="675" textAnchor="middle" textLength={db === 0 ? 4 : db > -10 ? 7 : 11} lengthAdjust="spacingAndGlyphs">{db}</text>
      ))}
    </svg>
  </section>
);

const SelectionPanel = () => (
  <section className="h-[83px] w-[231px] shrink-0 bg-[#393939] pl-[9px]">
    <div className="flex h-[24px] items-center pl-px text-[#e0e0e0]">
      <T w={61}>Selection/View</T>
      <Burger className="ml-[8px] text-[#b8b8b8]" />
    </div>
    <div className="flex h-[17px] items-center pl-[42px]"><T w={19}>Start</T><T w={15} className="ml-[42px]">End</T><T w={35} className="ml-[44px]">Duration</T></div>
    <div className="flex h-[15px] items-center font-medium text-[#4097ee]"><T w={37} className="font-normal text-[#c2c2c2]">Selection</T><T w={35} className="ml-[6px]">0:15.330</T><T w={35} className="ml-[25px]">0:15.330</T><T w={35} className="ml-[24px]">0:00.000</T></div>
    <div className="flex h-[19px] items-center font-medium text-[#4097ee]"><T w={20} className="font-normal text-[#c2c2c2]">View</T><T w={35} className="ml-[23px]">0:00.000</T><T w={35} className="ml-[25px]">2:19.023</T><T w={35} className="ml-[24px]">2:19.023</T></div>
  </section>
);

const StatusBar = () => (
  <div className="mt-[2px] flex h-[17px] shrink-0 items-center border-b border-[#5c6266] bg-[#393939] pt-px pl-[7px]">
    <T w={178}>Read MP3 Audio completed in 0,54 seconds</T>
    <Sep className="ml-[594px] h-[10px]" />
    <Sep className="ml-[41px] h-[10px]" />
    <Sep className="ml-[83px] h-[12px]" />
    <T w={148} className="ml-[7px]">44100 Hz ● 32-bit (float) ● Stereo</T>
    <Sep className="ml-[6px] h-[12px]" />
    <T w={38} className="ml-[6px]">46,85 MB</T>
    <Sep className="ml-[6px] h-[12px]" />
    <T w={34} className="ml-[13px]">2:19.232</T>
    <Sep className="ml-[6px] h-[12px]" />
    <T w={54} className="ml-[6px]">37,79 GB free</T>
    <Sep className="ml-[6px] h-[12px]" />
  </div>
);

const Taskbar = () => (
  <div className="flex h-[23px] shrink-0 items-center bg-[#dcecf8]">
    <div className="relative h-full w-[45px] shrink-0">
      <svg width="30" height="28" viewBox="0 0 30 28" className="absolute -top-[5px] left-[7px]">
        <defs>
          <radialGradient id="orb" cx=".5" cy=".9" r=".9"><stop offset="0" stopColor="#3fd0f5" /><stop offset=".5" stopColor="#1a62ab" /><stop offset="1" stopColor="#a7bfd4" /></radialGradient>
        </defs>
        <circle cx="15" cy="14.500" r="14" fill="url(#orb)" stroke="#3a6b98" />
        <path d="M8 8.500q3-2 6.500 0l-1 5.500q-3.500-1.500-6.500 0z" fill="#f0713a" />
        <path d="M15.800 9q3.500 1.500 6.700 0l-1 5.500q-3.200 1.500-6.700 0z" fill="#9bd34a" />
        <path d="M6.800 15.300q3-1.500 6.500 0l-1 5q-3.500-1.500-6.500 0z" fill="#58b4ef" />
        <path d="M14.600 15.800q3.500 1.500 6.700 0l-1 5q-3.200 1.500-6.700 0z" fill="#fbd045" />
      </svg>
    </div>
    <svg width="14" height="13" viewBox="0 0 14 13" className="ml-[11px]"><path d="M1 2h5l1 1h5v9H1z" fill="#efe6b4" /><path d="M4 1h6v5H4z" fill="#f6f9ee" /><path d="M2 12V6M12 12V7" stroke="#b6cfd2" strokeWidth="2" /></svg>
    <svg width="13" height="13" viewBox="0 0 13 13" className="ml-[20px]"><path d="M6.500 6.500L.9 3.300A6.400 6.400 0 0 1 12.200 3.500H6.500z" fill="#e04a3a" /><path d="M6.500 6.500L.9 3.300A6.400 6.400 0 0 0 6 13l3-5z" fill="#3aa757" /><path d="M6.500 3.500h5.700A6.400 6.400 0 0 1 6 13l3.200-5z" fill="#f6c629" /><circle cx="6.500" cy="6.500" r="3" fill="#fff" /><circle cx="6.500" cy="6.500" r="2.300" fill="#4285f0" /></svg>
    <svg width="14" height="13" viewBox="0 0 14 13" fill="none" className="ml-[20px]"><path d="M11.500 9A4.800 4.800 0 1 1 11.800 6.700H4" stroke="#73c4e8" strokeWidth="2.200" /><path d="M1 11.500Q-1 9 6 4T13 1.500" stroke="#d7d58a" strokeWidth="1.200" /></svg>
    <svg width="13" height="13" viewBox="0 0 13 13" className="ml-[20px]"><rect width="13" height="13" rx="1.500" fill="#20b7ea" /><path d="M3 10V4.500h7V10M5.500 10V7h2.500v3" fill="none" stroke="#fff" strokeWidth="1.500" /></svg>
    <div className="ml-[11px] flex h-full gap-[2px] py-px">
      <span className="flex w-[31px] items-center justify-center border border-[#a9b7c4] bg-[#eff6fc]"><svg width="13" height="13" viewBox="0 0 13 13"><path d="M0 0h13v13H1L0 12z" fill="#3256bf" /><path d="M3 0h7v4.500H3zM2 7h9v6H2z" fill="#f5f5f7" /><path d="M7.500 1h1.500v3H7.500z" fill="#3256bf" /></svg></span>
      <span className="flex w-[31px] items-center justify-center border border-[#a9b7c4] bg-white"><b className="flex h-[11px] w-[12px] items-center justify-center bg-[#054c43] text-[7px] text-[#2be0c1]">Au</b></span>
      <span className="flex w-[31px] items-center justify-center border border-[#a9b7c4] bg-[#f1f7fc]"><svg width="12" height="12" viewBox="0 0 12 12" fill="none" stroke="#2f83c9" strokeWidth="1.400"><circle cx="6" cy="6" r="5" /><path d="M6 0v12M0 6h12" /></svg></span>
      <span className="flex w-[31px] items-center justify-center border border-[#a9b7c4] bg-[#eaf3fa]"><svg width="10" height="8" viewBox="0 0 10 8"><path d="M0 0h10v8H0z" fill="#58656f" /><path d="M1 1h5v3H1z" fill="#e8694c" /><path d="M2 2.500h6V6H2z" fill="#e8f3e2" /><path d="M6 1h3v3H6z" fill="#6cb6d8" /><path d="M1 4.500h2V7H1z" fill="#7fbf5a" /></svg></span>
    </div>
    <div className="ml-auto flex h-full w-[145px] items-center bg-linear-to-r from-[#dcecf8] to-[#b4c7da] to-30% text-white">
      <T w={13} className="ml-[30px] text-[10px]">EN</T>
      <svg width="6" height="4" viewBox="0 0 6 4" className="ml-[14px]"><path d="M0 4l3-4 3 4z" fill="#fff" stroke="#7e90a3" strokeWidth=".5" /></svg>
      <svg width="14" height="13" viewBox="0 0 14 13" className="ml-[13px]"><rect x="3.500" y="2.500" width="9" height="7" fill="#a9bccb" stroke="#f4f7fa" /><path d="M6 12h6M1 .5v4h3v-4M2.500 4.500V12" fill="none" stroke="#5f6f7e" /></svg>
      <T w={24} className="ml-[13px]">14:49</T>
      <i className="ml-auto h-full w-[9px] border-l border-[#8598ad] bg-linear-to-b from-[#dbe5ee] to-[#92a8bd]" />
    </div>
  </div>
);

/* ---------- headline over the window ---------- */

const HEADLINE: [string, number, number, number][] = [['Удаление', 49, 271, 518], ['щелчков', 54, 409, 463], ['грампластинок', 51, 548, 820]];

const Headline = () => (
  <svg width="1280" height="720" viewBox="0 0 1280 720" className="pointer-events-none absolute inset-0" fontFamily="'DejaVu Serif', serif" fontWeight="700" fontSize="101">
    <defs>
      <filter id="wobble" x="-5%" y="-20%" width="110%" height="140%">
        <feTurbulence type="fractalNoise" baseFrequency=".035" numOctaves="2" seed="4" />
        <feDisplacementMap in="SourceGraphic" scale="8" xChannelSelector="R" yChannelSelector="G" />
      </filter>
      <filter id="rough" x="-5%" y="-20%" width="110%" height="140%">
        <feTurbulence type="fractalNoise" baseFrequency=".08" numOctaves="2" seed="8" />
        <feDisplacementMap in="SourceGraphic" scale="8" xChannelSelector="R" yChannelSelector="G" />
      </filter>
      <pattern id="scribble" width="41" height="31" patternUnits="userSpaceOnUse">
        <path d="M0 0h41v31H0z" fill="#fb0200" />
        <path d="M4 9l5-6M13 14l3-4M22 8l5-5M34 15l3-4M6 24l5-7M19 25l5-4M30 28l2-4" stroke="#fff" strokeWidth="1.300" strokeLinecap="round" />
      </pattern>
    </defs>
    <g filter="url(#wobble)">
      {HEADLINE.map(([t, x, y, w]) => <text key={t} x={x} y={y} textLength={w} lengthAdjust="spacingAndGlyphs" fill="#fff" stroke="#fff" strokeWidth="23" strokeLinejoin="round">{t}</text>)}
    </g>
    <g filter="url(#rough)">
      {HEADLINE.map(([t, x, y, w]) => <text key={t} x={x} y={y} textLength={w} lengthAdjust="spacingAndGlyphs" fill="url(#scribble)" stroke="#fb0200" strokeWidth="3" strokeLinejoin="round">{t}</text>)}
    </g>
  </svg>
);

export default function App() {
  return (
    <div className="relative flex h-[720px] w-[1280px] flex-col overflow-hidden bg-[#222] font-['Noto_Sans','Open_Sans',sans-serif] text-[10.500px] leading-[15px] text-[#c2c2c2]">
      <TitleBar />
      <MenuBar />
      <Toolbar />
      <main className="mt-[2px] flex h-[620px] shrink-0 gap-[3px]">
        <div className="flex w-[445px] shrink-0 flex-col">
          <FilesPanel />
          <div className="mt-[3px]"><BatchPanel /></div>
          <div className="mt-[4px]"><VideoPanel /></div>
        </div>
        <div className="flex flex-col gap-[3px]">
          <div className="flex h-[534px]">
            <Editor />
            <div className="ml-[3px]"><FrequencyPanel /></div>
            <div className="ml-[4px]"><EssentialPanel /></div>
          </div>
          <div className="flex gap-[3px]">
            <LevelsPanel />
            <SelectionPanel />
          </div>
        </div>
      </main>
      <StatusBar />
      <Taskbar />
      <Headline />
    </div>
  );
}
